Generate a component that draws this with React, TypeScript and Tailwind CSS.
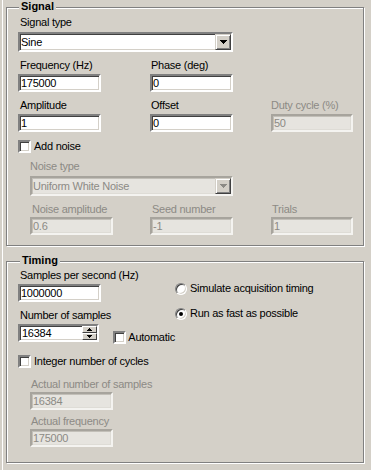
import React from "react";

const ENABLED_FIELD =
  "box-border h-[18px] border-2 border-t-[#808080] border-l-[#808080] border-b-white border-r-white shadow-[inset_1px_1px_0_#404040,inset_-1px_-1px_0_#d4d0c8] bg-white pl-[1px] leading-[14px] text-black whitespace-nowrap overflow-hidden";
const DISABLED_FIELD =
  "box-border h-[18px] border-2 border-t-[#a7a49d] border-l-[#a7a49d] border-b-[#f4f3f0] border-r-[#f4f3f0] shadow-[inset_1px_1px_0_#c2bfb8,inset_-1px_-1px_0_#dedcd6] bg-[#e6e4df] pl-[1px] leading-[14px] text-[#8c8a85] whitespace-nowrap overflow-hidden";

function Label({
  children,
  disabled,
  className = "",
}: {
  children: React.ReactNode;
  disabled?: boolean;
  className?: string;
}) {
  return (
    <div
      className={`h-[13px] leading-[13px] whitespace-nowrap ${
        disabled ? "text-[#8c8a85]" : "text-black"
      } ${className}`}
    >
      {children}
    </div>
  );
}

function Field({
  children,
  disabled,
  className = "",
}: {
  children: React.ReactNode;
  disabled?: boolean;
  className?: string;
}) {
  return (
    <div className={`${disabled ? DISABLED_FIELD : ENABLED_FIELD} ${className}`}>
      {children}
    </div>
  );
}

function DownArrow({ color }: { color: string }) {
  return (
    <svg width="7" height="4" viewBox="0 0 7 4" shapeRendering="crispEdges">
      <polygon
        points="0,0 7,0 7,1 6,1 6,2 5,2 5,3 4,3 4,4 3,4 3,3 2,3 2,2 1,2 1,1 0,1"
        fill={color}
      />
    </svg>
  );
}

function SmallArrow({ up }: { up?: boolean }) {
  return (
    <svg width="5" height="3" viewBox="0 0 5 3" shapeRendering="crispEdges">
      {up ? (
        <polygon points="2,0 3,0 3,1 4,1 4,2 5,2 5,3 0,3 0,2 1,2 1,1 2,1" fill="#000" />
      ) : (
        <polygon points="0,0 5,0 5,1 4,1 4,2 3,2 3,3 2,3 2,2 1,2 1,1 0,1" fill="#000" />
      )}
    </svg>
  );
}

function Combo({
  value,
  disabled,
  className = "",
}: {
  value: string;
  disabled?: boolean;
  className?: string;
}) {
  return (
    <div
      className={`box-border h-[20px] flex border-2 ${
        disabled
          ? "border-t-[#a7a49d] border-l-[#a7a49d] border-b-[#f4f3f0] border-r-[#f4f3f0] shadow-[inset_1px_1px_0_#c2bfb8,inset_-1px_-1px_0_#dedcd6] bg-[#e6e4df] text-[#8c8a85]"
          : "border-t-[#808080] border-l-[#808080] border-b-white border-r-white shadow-[inset_1px_1px_0_#404040,inset_-1px_-1px_0_#d4d0c8] bg-white text-black"
      } ${className}`}
    >
      <div className="flex-1 pl-[1px] leading-[16px] whitespace-nowrap overflow-hidden">
        {value}
      </div>
      <div className="box-border w-[16px] h-[16px] flex items-center justify-center border border-t-[#d4d0c8] border-l-[#d4d0c8] border-b-[#404040] border-r-[#404040] shadow-[inset_1px_1px_0_#fff,inset_-1px_-1px_0_#808080] bg-[#d4d0c8]">
        <DownArrow color={disabled ? "#8c8a85" : "#000"} />
      </div>
    </div>
  );
}

function Spin({ value, className = "" }: { value: string; className?: string }) {
  return (
    <div className={`${ENABLED_FIELD} flex pl-0 ${className}`}>
      <div className="flex-1 pl-[1px] leading-[14px]">{value}</div>
      <div className="flex flex-col w-[15px]">
        <div className="box-border h-[7px] flex items-center justify-center border border-t-white border-l-white border-b-[#404040] border-r-[#404040] bg-[#d4d0c8]">
          <SmallArrow up />
        </div>
        <div className="box-border h-[7px] flex items-center justify-center border border-t-white border-l-white border-b-[#404040] border-r-[#404040] bg-[#d4d0c8]">
          <SmallArrow />
        </div>
      </div>
    </div>
  );
}

function Checkbox() {
  return (
    <div className="box-border w-[13px] h-[13px] shrink-0 border-2 border-t-[#808080] border-l-[#808080] border-b-white border-r-white shadow-[inset_1px_1px_0_#404040,inset_-1px_-1px_0_#d4d0c8] bg-white" />
  );
}

function Radio({ checked }: { checked?: boolean }) {
  return (
    <div className="box-border w-[12px] h-[12px] shrink-0 rounded-full border border-t-[#808080] border-l-[#808080] border-b-white border-r-white bg-white shadow-[inset_1px_1px_0_#404040,inset_-1px_-1px_0_#d4d0c8] flex items-center justify-center">
      {checked && <div className="w-[4px] h-[4px] rounded-full bg-black" />}
    </div>
  );
}

export default function App() {
  return (
    <div className="font-['Liberation_Sans',Arial,sans-serif] text-[11px] tracking-[-0.25px] text-black w-[371px] h-[470px] bg-[#d4d0c8] flex overflow-hidden">
      <div className="w-[2px]" />
      <div className="w-px bg-white" />
      <div className="pl-[3px] pt-[7px] flex flex-col">
        {/* Signal group */}
        <div className="relative box-border w-[358px] border border-[#808080] shadow-[inset_1px_1px_0_#fff,1px_1px_0_#fff] pl-[11px] pt-[8px] pb-[10px]">
          <div className="absolute left-[12px] top-[-8px] px-[2px] bg-[#d4d0c8] font-bold leading-[13px] tracking-normal">
            Signal
          </div>
          <Label className="ml-[2px]">Signal type</Label>
          <Combo value="Sine" className="mt-[3px] w-[215px]" />

          <div className="mt-[7px] grid grid-cols-[132px_121px_83px]">
            <div>
              <Label className="ml-[2px]">Frequency (Hz)</Label>
              <Field className="mt-[2px] w-[83px]">175000</Field>
            </div>
            <div>
              <Label className="ml-[1px]">Phase (deg)</Label>
              <Field className="mt-[2px] w-[83px]">0</Field>
            </div>
            <div />
          </div>

          <div className="mt-[7px] grid grid-cols-[132px_121px_83px]">
            <div>
              <Label className="ml-[2px]">Amplitude</Label>
              <Field className="mt-[2px] w-[83px]">1</Field>
            </div>
            <div>
              <Label className="ml-[1px]">Offset</Label>
              <Field className="mt-[2px] w-[83px]">0</Field>
            </div>
            <div>
              <Label disabled>Duty cycle (%)</Label>
              <Field disabled className="mt-[2px] w-[82px]">
                50
              </Field>
            </div>
          </div>

          <div className="mt-[8px] flex items-center gap-[3px] leading-[13px]">
            <Checkbox />
            <span>Add noise</span>
          </div>

          <div className="pl-[12px]">
            <Label disabled className="mt-[7px]">
              Noise type
            </Label>
            <Combo disabled value="Uniform White Noise" className="mt-[3px] w-[203px]" />
            <div className="mt-[7px] grid grid-cols-[120px_121px_83px]">
              <div>
                <Label disabled className="ml-[2px]">
                  Noise amplitude
                </Label>
                <Field disabled className="mt-[1px] w-[83px]">
                  0.6
                </Field>
              </div>
              <div>
                <Label disabled className="ml-[2px]">
                  Seed number
                </Label>
                <Field disabled className="mt-[1px] w-[83px]">
                  -1
                </Field>
              </div>
              <div>
                <Label disabled className="ml-[1px]">
                  Trials
                </Label>
                <Field disabled className="mt-[1px] w-[82px]">
                  1
                </Field>
              </div>
            </div>
          </div>
        </div>

        {/* Timing group */}
        <div className="relative mt-[15px] box-border w-[358px] border border-[#808080] shadow-[inset_1px_1px_0_#fff,1px_1px_0_#fff] pl-[11px] pt-[7px] pb-[15px]">
          <div className="absolute left-[13px] top-[-8px] px-[2px] bg-[#d4d0c8] font-bold leading-[13px] tracking-normal">
            Timing
          </div>
          <div className="flex">
            <div className="w-[157px]">
              <Label className="ml-[2px]">Samples per second (Hz)</Label>
              <Field className="mt-[2px] w-[83px]">1000000</Field>
              <Label className="mt-[7px] ml-[2px]">Number of samples</Label>
              <div className="mt-[2px] flex items-start">
                <Spin value="16384" className="w-[83px]" />
                <div className="ml-[14px] mt-[7px] flex items-center gap-[2px] leading-[13px]">
                  <Checkbox />
                  <span>Automatic</span>
                </div>
              </div>
            </div>
            <div className="pt-[13px]">
              <div className="h-[13px] flex items-center gap-[3px] leading-[13px] whitespace-nowrap">
                <Radio />
                <span>Simulate acquisition timing</span>
              </div>
              <div className="mt-[12px] h-[13px] flex items-center gap-[3px] leading-[13px] whitespace-nowrap">
                <Radio checked />
                <span>Run as fast as possible</span>
              </div>
            </div>
          </div>

          <div className="mt-[11px] flex items-center gap-[3px] leading-[13px]">
            <Checkbox />
            <span>Integer number of cycles</span>
          </div>

          <div className="pl-[12px]">
            <Label disabled className="mt-[10px] ml-[1px]">
              Actual number of samples
            </Label>
            <Field disabled className="mt-[1px] w-[83px]">
              16384
            </Field>
            <Label disabled className="mt-[5px] ml-[1px]">
              Actual frequency
            </Label>
            <Field disabled className="mt-[1px] w-[83px]">
              175000
            </Field>
          </div>
        </div>
      </div>
    </div>
  );
}
